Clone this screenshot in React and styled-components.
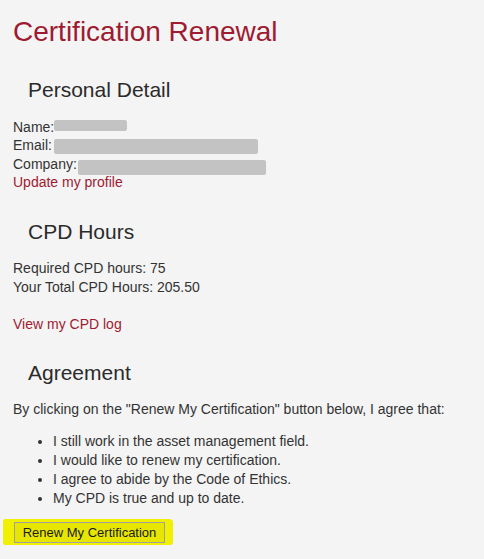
import React from 'react';
import styled, { createGlobalStyle } from 'styled-components';

const GlobalStyle = createGlobalStyle`
    html, body {
        margin: 0;
        padding: 0;
        background: #f4f4f4;
    }
    body {
        font-family: "Liberation Sans", Arial, sans-serif;
        color: #333333;
        font-size: 14px;
    }
`;

const Page = styled.div`
    padding: 16px 13px 20px 13px;
    min-height: 559px;
    box-sizing: border-box;
`;

const Title = styled.h1`
    margin: 0;
    font-size: 28px;
    line-height: 32px;
    font-weight: normal;
    color: #9e1b32;
`;

const SectionTitle = styled.h2`
    margin: ${(p) => p.$top}px 0 0 0;
    padding-left: 15px;
    font-size: 21px;
    line-height: 24px;
    font-weight: normal;
    color: #2b2b2b;
`;

const Block = styled.div`
    margin-top: ${(p) => p.$top}px;
    line-height: ${(p) => p.$line || 19}px;
`;

const Line = styled.div`
    display: flex;
    align-items: center;
    white-space: nowrap;
`;

const Redacted = styled.span`
    display: inline-block;
    width: ${(p) => p.$w}px;
    height: ${(p) => p.$h || 12}px;
    margin-left: ${(p) => p.$ml || 0}px;
    background: #c3c3c3;
    border-radius: 2px;
    transform: translateY(${(p) => p.$dy || 0}px);
`;

const StyledLink = styled.a`
    color: #9e1b32;
    text-decoration: none;
    cursor: pointer;
`;

const List = styled.ul`
    margin: 13px 0 0 0;
    padding-left: 40px;
    line-height: 19px;
`;

const Item = styled.li`
    padding-left: 0;
`;

const Highlight = styled.div`
    display: inline-block;
    margin: 11px 0 0 -10px;
    padding: 3px 8px 2px 11px;
    background: #f0f000;
    border-radius: 2px 4px 3px 2px;
`;

const Button = styled.button`
    display: block;
    width: 151px;
    height: 21px;
    padding: 0;
    background: #e6e600;
    border: 1px solid #a0a0a0;
    font-family: "Liberation Sans", Arial, sans-serif;
    font-size: 13px;
    color: #1a1a1a;
    cursor: pointer;
`;

export default function App() {
    return (
        <Page>
            <GlobalStyle />
            <Title>Certification Renewal</Title>

            <SectionTitle $top={30}>Personal Detail</SectionTitle>
            <Block $top={16} $line={18.4}>
                <Line>Name:<Redacted $w={73} $h={11} $dy={-2} /></Line>
                <Line>Email: <Redacted $w={204} $h={15} $ml={2} $dy={1} /></Line>
                <Line>Company:<Redacted $w={188} $h={15} $ml={1} $dy={3} /></Line>
                <Line><StyledLink>Update my profile</StyledLink></Line>
            </Block>

            <SectionTitle $top={28}>CPD Hours</SectionTitle>
            <Block $top={15}>
                <div>Required CPD hours: 75</div>
                <div>Your Total CPD Hours: 205.50</div>
            </Block>
            <Block $top={18}>
                <StyledLink>View my CPD log</StyledLink>
            </Block>

            <SectionTitle $top={27}>Agreement</SectionTitle>
            <Block $top={15}>
                By clicking on the "Renew My Certification" button below, I agree that:
            </Block>
            <List>
                <Item>I still work in the asset management field.</Item>
                <Item>I would like to renew my certification.</Item>
                <Item>I agree to abide by the Code of Ethics.</Item>
                <Item>My CPD is true and up to date.</Item>
            </List>

            <Highlight>
                <Button type="button">Renew My Certification</Button>
            </Highlight>
        </Page>
    );
}
